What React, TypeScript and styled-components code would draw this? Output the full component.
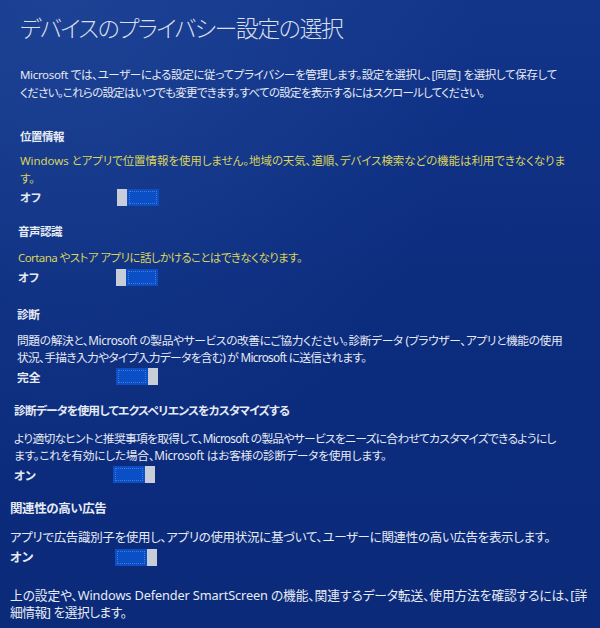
import React from "react";
import styled, { createGlobalStyle } from "styled-components";

const Global = createGlobalStyle`
  html, body { margin: 0; padding: 0; }
  body { background: #0c2c7e; }
`;

const Screen = styled.div`
  width: 600px;
  height: 628px;
  overflow: hidden;
  box-sizing: border-box;
  padding: 12px 0 0 20px;
  background:
    radial-gradient(ellipse at 10% 0%, rgba(40, 80, 160, 0.5) 0%, rgba(40, 80, 160, 0) 55%),
    linear-gradient(180deg, #12358a 0%, #0c2c7e 45%, #0b2a7a 100%);
  color: #e6eaf3;
  font-family: "Noto Sans", "Noto Sans CJK JP", sans-serif;
  font-feature-settings: "palt";
  display: flex;
  flex-direction: column;
`;

const Title = styled.h1`
  margin: 0;
  font-size: 23px;
  line-height: 32px;
  font-weight: 300;
  color: #d9dfeb;
  letter-spacing: -1.5px;
  white-space: nowrap;
`;

const Paragraph = styled.p<{ $top: number; $indent?: number; $lh?: number; $fs?: number }>`
  margin: ${(p) => p.$top}px 0 0 ${(p) => p.$indent ?? 0}px;
  font-size: ${(p) => p.$fs ?? 11.5}px;
  line-height: ${(p) => p.$lh ?? 18}px;
  white-space: nowrap;
  color: #e6eaf3;
`;

const Line = styled.span<{ $ls: number }>`
  display: block;
  letter-spacing: ${(p) => p.$ls}px;
`;

const Section = styled.section<{ $top: number; $indent: number }>`
  margin: ${(p) => p.$top}px 0 0 ${(p) => p.$indent}px;
  display: flex;
  flex-direction: column;
`;

const Heading = styled.h2<{ $fs: number; $ls: number }>`
  margin: 0;
  font-size: ${(p) => p.$fs}px;
  letter-spacing: ${(p) => p.$ls}px;
  line-height: 18px;
  font-weight: 700;
  color: #e6eaf3;
  white-space: nowrap;
`;

const Desc = styled.p<{ $gap: number; $warn?: boolean; $lh?: number; $fs: number }>`
  margin: ${(p) => p.$gap}px 0 0 0;
  font-size: ${(p) => p.$fs}px;
  line-height: ${(p) => p.$lh ?? 18}px;
  white-space: nowrap;
  color: ${(p) => (p.$warn ? "#d9d35c" : "#e6eaf3")};
`;

const ToggleRow = styled.div<{ $gap: number; $label: number }>`
  margin-top: ${(p) => p.$gap}px;
  display: grid;
  grid-template-columns: ${(p) => p.$label}px auto;
  align-items: center;
  height: 18px;
`;

const ToggleLabel = styled.span<{ $fs: number }>`
  font-size: ${(p) => p.$fs}px;
  font-weight: 700;
  line-height: 18px;
  color: #e6eaf3;
  transform: translateY(1px);
`;

const Track = styled.div<{ $on: boolean }>`
  width: 42px;
  height: 17px;
  display: flex;
  flex-direction: ${(p) => (p.$on ? "row-reverse" : "row")};
  background: #0b4fc6;
`;

const Knob = styled.div`
  width: 10px;
  height: 17px;
  background: #c9cdd8;
`;

const Fill = styled.div`
  flex: 1;
  margin: 2px;
  border: 1px dotted rgba(100, 140, 225, 0.7);
`;

function Toggle({ on }: { on: boolean }) {
  return (
    <Track $on={on}>
      <Knob />
      <Fill />
    </Track>
  );
}

type TextLine = { text: string; ls: number };

type Item = {
  title: string;
  titleLs: number;
  titleFs: number;
  lines: TextLine[];
  warn?: boolean;
  state: string;
  on: boolean;
  top: number;
  indent: number;
  descGap: number;
  rowGap: number;
  label: number;
  fs: number;
  lh?: number;
};

const items: Item[] = [
  {
    title: "位置情報",
    titleLs: -0.5,
    titleFs: 11.5,
    lines: [
      {
        text: "Windows とアプリで位置情報を使用しません。地域の天気、道順、デバイス検索などの機能は利用できなくなりま",
        ls: -0.07,
      },
      { text: "す。", ls: -0.07 },
    ],
    warn: true,
    state: "オフ",
    on: false,
    top: 26,
    indent: 0,
    descGap: 6,
    rowGap: 0,
    label: 97,
    fs: 11.5,
  },
  {
    title: "音声認識",
    titleLs: -0.5,
    titleFs: 11.5,
    lines: [{ text: "Cortana やストア アプリに話しかけることはできなくなります。", ls: -0.57 }],
    warn: true,
    state: "オフ",
    on: false,
    top: 17,
    indent: -2,
    descGap: 8,
    rowGap: 1,
    label: 98,
    fs: 11.5,
  },
  {
    title: "診断",
    titleLs: -0.5,
    titleFs: 11.75,
    lines: [
      {
        text: "問題の解決と、Microsoft の製品やサービスの改善にご協力ください。診断データ (ブラウザー、アプリと機能の使用",
        ls: -0.4,
      },
      { text: "状況、手描き入力やタイプ入力データを含む) が Microsoft に送信されます。", ls: -0.7 },
    ],
    state: "完全",
    on: true,
    top: 19,
    indent: -3,
    descGap: 9,
    rowGap: 1,
    label: 99,
    fs: 11.75,
    lh: 17,
  },
  {
    title: "診断データを使用してエクスペリエンスをカスタマイズする",
    titleLs: -0.76,
    titleFs: 11.75,
    lines: [
      {
        text: "より適切なヒントと推奨事項を取得して、Microsoft の製品やサービスをニーズに合わせてカスタマイズできるようにし",
        ls: -0.71,
      },
      { text: "ます。これを有効にした場合、Microsoft はお客様の診断データを使用します。", ls: -0.28 },
    ],
    state: "オン",
    on: true,
    top: 16,
    indent: -6,
    descGap: 11,
    rowGap: 1,
    label: 99,
    fs: 11.75,
    lh: 17,
  },
  {
    title: "関連性の高い広告",
    titleLs: -0.4,
    titleFs: 12.5,
    lines: [
      {
        text: "アプリで広告識別子を使用し、アプリの使用状況に基づいて、ユーザーに関連性の高い広告を表示します。",
        ls: -0.32,
      },
    ],
    state: "オン",
    on: true,
    top: 17,
    indent: -10,
    descGap: 11,
    rowGap: 1,
    label: 105,
    fs: 12.5,
  },
];

export default function App() {
  return (
    <>
      <Global />
      <Screen>
        <Title>デバイスのプライバシー設定の選択</Title>
        <Paragraph $top={22}>
          <Line $ls={-0.33}>
            Microsoft では、ユーザーによる設定に従ってプライバシーを管理します。設定を選択し、[同意] を選択して保存して
          </Line>
          <Line $ls={-0.71}>
            ください。これらの設定はいつでも変更できます。すべての設定を表示するにはスクロールしてください。
          </Line>
        </Paragraph>
        {items.map((it) => (
          <Section key={it.title} $top={it.top} $indent={it.indent}>
            <Heading $fs={it.titleFs} $ls={it.titleLs}>
              {it.title}
            </Heading>
            <Desc $gap={it.descGap} $warn={it.warn} $lh={it.lh} $fs={it.fs}>
              {it.lines.map((l, i) => (
                <Line key={i} $ls={l.ls}>
                  {l.text}
                </Line>
              ))}
            </Desc>
            <ToggleRow $gap={it.rowGap} $label={it.label}>
              <ToggleLabel $fs={it.titleFs}>{it.state}</ToggleLabel>
              <Toggle on={it.on} />
            </ToggleRow>
          </Section>
        ))}
        <Paragraph $top={21} $indent={-10} $lh={17} $fs={12.75}>
          <Line $ls={-0.13}>
            上の設定や、Windows Defender SmartScreen の機能、関連するデータ転送、使用方法を確認するには、[詳
          </Line>
          <Line $ls={-0.48}>細情報] を選択します。</Line>
        </Paragraph>
      </Screen>
    </>
  );
}
